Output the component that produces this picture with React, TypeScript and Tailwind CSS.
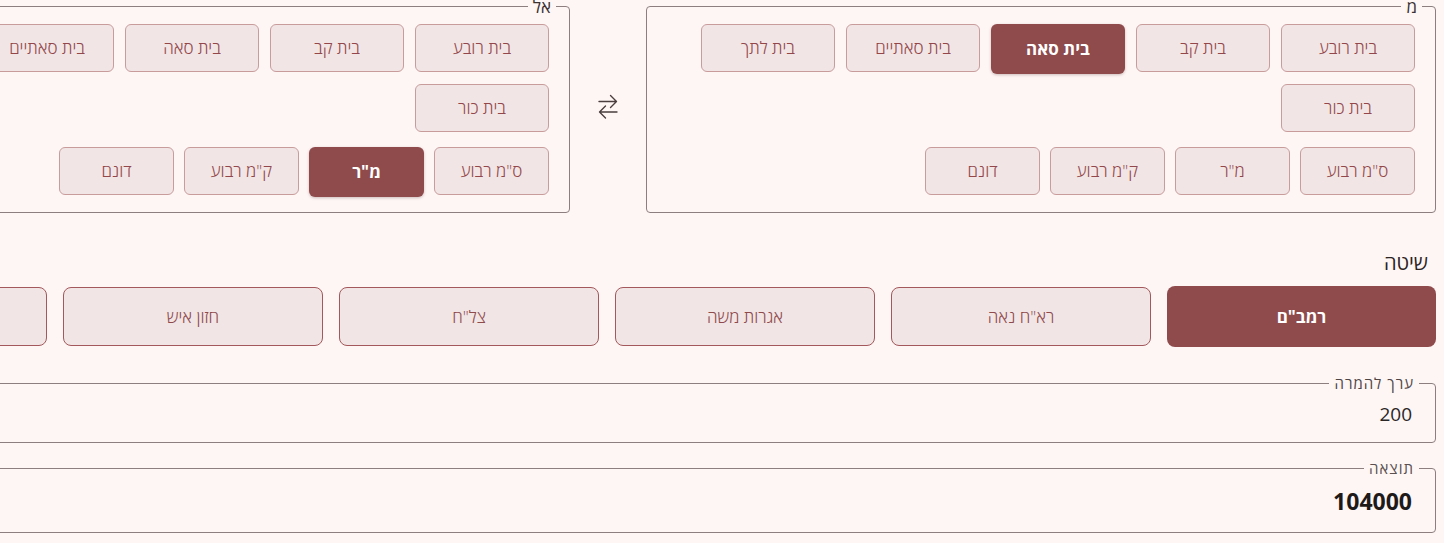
import React, { useState } from "react";

const BAYIT_UNITS = ["בית רובע", "בית קב", "בית סאה", "בית סאתיים", "בית לתך", "בית כור"];
const METRIC_UNITS = ['ס"מ רבוע', 'מ"ר', 'ק"מ רבוע', "דונם"];
const METHODS = ['רמב"ם', 'רא"ח נאה', "אגרות משה", 'צל"ח', "חזון איש", "חתם סופר"];

// size of a beit se'ah in square meters, per method
const SEAH_M2: Record<string, number> = {
  'רמב"ם': 520,
  'רא"ח נאה': 576,
  "אגרות משה": 691,
  'צל"ח': 648,
  "חזון איש": 784,
  "חתם סופר": 784,
};

const BAYIT_IN_SEAH: Record<string, number> = {
  "בית רובע": 1 / 24,
  "בית קב": 1 / 6,
  "בית סאה": 1,
  "בית סאתיים": 2,
  "בית לתך": 15,
  "בית כור": 30,
};

const METRIC_IN_M2: Record<string, number> = {
  'ס"מ רבוע': 0.0001,
  'מ"ר': 1,
  'ק"מ רבוע': 1000000,
  "דונם": 1000,
};

function toM2(unit: string, method: string) {
  if (unit in METRIC_IN_M2) return METRIC_IN_M2[unit];
  return BAYIT_IN_SEAH[unit] * SEAH_M2[method];
}

function UnitButton({ label, active, width, onClick }: { label: string; active: boolean; width: string; onClick: () => void }) {
  return (
    <button
      onClick={onClick}
      className={`${width} shrink-0 rounded-[6px] text-[17px] ${
        active
          ? "h-[50px] -mb-[2px] bg-[#8f4a4c] text-white font-bold shadow-[0_1px_3px_rgba(60,20,20,0.25)]"
          : "h-[48px] bg-[#f1e5e5] border border-[#c99c9c] text-[#93474a] font-light"
      }`}
    >
      {label}
    </button>
  );
}

function UnitPicker({ title, selected, onSelect }: { title: string; selected: string; onSelect: (u: string) => void }) {
  return (
    <fieldset className="min-w-0 border border-[#8d7f7f] rounded-[4px] pr-[13px] pl-[20px] pt-[11px] pb-[17px]">
      <legend className="px-[5px] text-[17px] leading-[13px] text-[#3b3131]">{title}</legend>
      <div className="pr-[7px]">
        <div className="flex flex-wrap items-start gap-x-[11px] gap-y-[12px]">
          {BAYIT_UNITS.map((u) => (
            <UnitButton key={u} label={u} active={selected === u} width="w-[134px]" onClick={() => onSelect(u)} />
          ))}
        </div>
        <div className="flex items-start gap-[10px] mt-[15px]">
          {METRIC_UNITS.map((u) => (
            <UnitButton key={u} label={u} active={selected === u} width="w-[115px]" onClick={() => onSelect(u)} />
          ))}
        </div>
      </div>
    </fieldset>
  );
}

export default function App() {
  const [from, setFrom] = useState("בית סאה");
  const [to, setTo] = useState('מ"ר');
  const [method, setMethod] = useState('רמב"ם');
  const [value, setValue] = useState("200");

  const num = parseFloat(value);
  const result = isNaN(num) ? "" : String(Number(((num * toM2(from, method)) / toM2(to, method)).toFixed(4)));

  const swap = () => {
    setFrom(to);
    setTo(from);
  };

  return (
    <div dir="rtl" className="w-full min-h-screen overflow-hidden bg-[#fef6f5] font-['Open_Sans','Liberation_Sans',sans-serif]">
      <div className="w-[1672px] px-2 flex flex-col">
        {/* unit pickers */}
        <div className="grid grid-cols-[1fr_76px_1fr]">
          <UnitPicker title="מ" selected={from} onSelect={setFrom} />
          <div className="flex items-center justify-center">
            <button onClick={swap} className="text-[#4a3e3e]">
              <svg width="20" height="25" viewBox="0 0 20 25" fill="none" stroke="currentColor" strokeWidth="1.4" strokeLinecap="round" strokeLinejoin="round">
                <path d="M1 7.5H18.5M12.5 1.5L18.5 7.5L12.5 13.5" />
                <path d="M19 18H1.5M7.5 12L1.5 18L7.5 24" />
              </svg>
            </button>
          </div>
          <UnitPicker title="אל" selected={to} onSelect={setTo} />
        </div>

        {/* method */}
        <div className="mt-[36px] pr-2 text-[20px] leading-[28px] text-[#2b2222]">שיטה</div>
        <div className="mt-[9px] flex items-center gap-[16px]">
          {METHODS.map((m) => (
            <button
              key={m}
              onClick={() => setMethod(m)}
              className={`shrink-0 rounded-[8px] text-[17px] ${
                method === m
                  ? "w-[269px] h-[61px] bg-[#8f4a4c] text-white font-bold"
                  : "w-[260px] h-[59px] bg-[#f1e5e5] border border-[#a3585b] text-[#8f4a4c] font-light"
              }`}
            >
              {m}
            </button>
          ))}
        </div>

        {/* value */}
        <fieldset className="mt-[30px] border border-[#8d7f7f] rounded-[4px] pr-[16px] pl-[14px] pt-[12px] pb-[16px]">
          <legend className="px-[5px] text-[15px] leading-[13px] tracking-[1px] text-[#4f4545]">ערך להמרה</legend>
          <input
            value={value}
            onChange={(e) => setValue(e.target.value)}
            className="block w-full h-[24px] pr-[7px] bg-transparent outline-none text-[19px] leading-[24px] text-[#2b2626]"
          />
        </fieldset>

        {/* result */}
        <fieldset className="mt-[19px] border border-[#8d7f7f] rounded-[4px] pr-[16px] pl-[14px] pt-[12px] pb-[17px]">
          <legend className="px-[5px] text-[15px] leading-[13px] tracking-[1px] text-[#5a5050]">תוצאה</legend>
          <div className="pr-[7px] h-[28px] text-[23px] leading-[28px] font-bold text-[#1f1a1a]">{result}</div>
        </fieldset>
      </div>
    </div>
  );
}
